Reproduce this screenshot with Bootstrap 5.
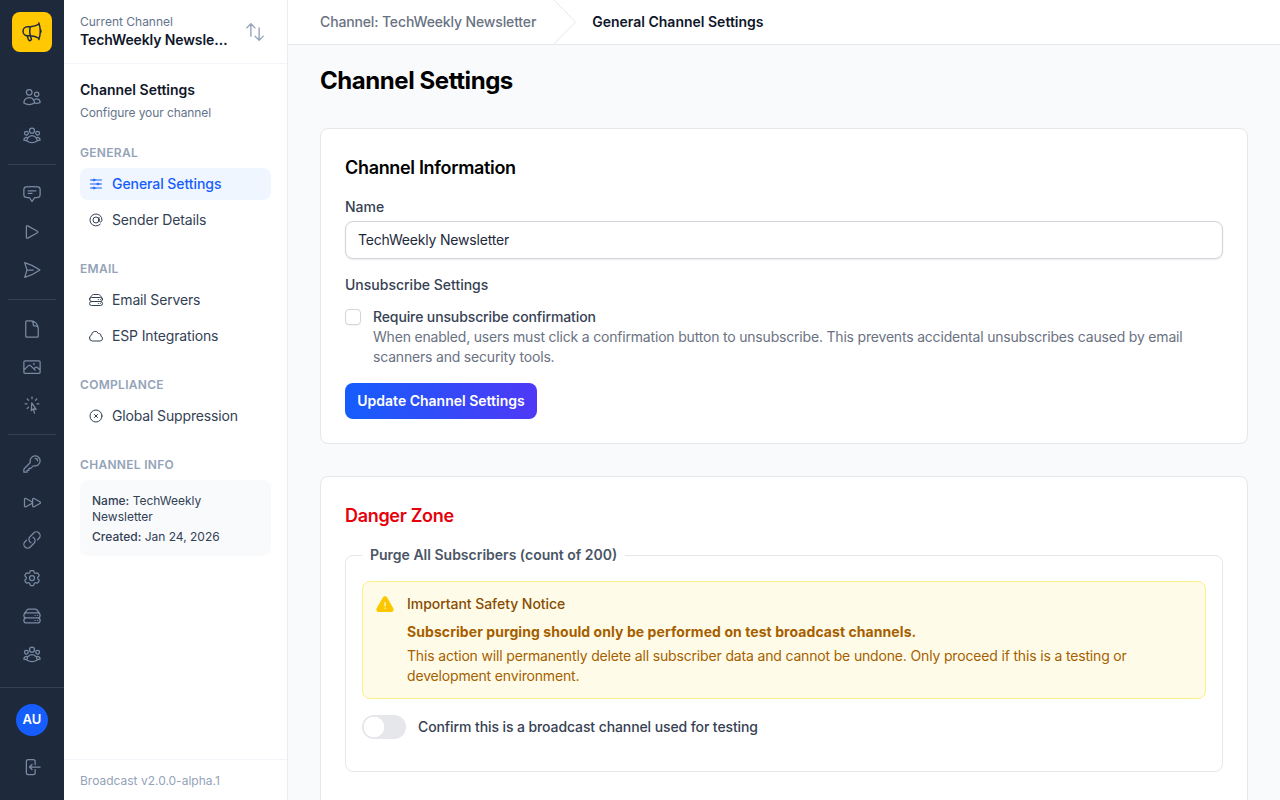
<!DOCTYPE html>
<html lang="en">
<head>
<meta charset="utf-8">
<title>Channel Settings</title>
<link href="https://cdn.jsdelivr.net/npm/bootstrap@5.3.0/dist/css/bootstrap.min.css" rel="stylesheet">
<style>
html,body{height:100%;overflow:hidden}
body{font-family:Inter,"Liberation Sans",sans-serif;font-size:14px;background:#f9fafb;color:#1e293b}
.ic{fill:none;stroke:currentColor;stroke-width:1.5;stroke-linecap:round;stroke-linejoin:round;flex:none}
.rail{width:64px;background:#1e293b;height:800px;flex:none}
.rail-top{padding-top:12px}
.logo-box{width:40px;height:40px;background:#ffc800;border-radius:8px;color:#1e293b;margin-bottom:26px}
.rail-btn{width:36px;height:38px;color:#7a8aa3}
.rail-rule{width:48px;height:1px;background:#334155;margin:10px 0 10px}
.rail-foot{height:113px;border-top:1px solid #334155;padding-top:16px}
.avatar-dot{width:32px;height:32px;background:#155dfc;color:#fff;font-weight:600;font-size:13px;border-radius:50%;margin-bottom:12px}
.side{width:224px;flex:none;height:800px;background:#fff;border-right:1px solid #e9edf2}
.side-head{height:64px;border-bottom:1px solid #f1f5f9;padding:0 16px}
.cur-label{font-size:12px;line-height:16px;color:#64748b}
.cur-name{font-size:14px;line-height:20px;font-weight:600;color:#0f172a;width:149px;letter-spacing:-.12px}
.swap-ic{color:#94a3b8;margin-right:5px}
.side-body{padding:16px 16px 0}
.side-title{font-size:14px;line-height:20px;font-weight:600;color:#0f172a;margin-top:0}
.side-sub{font-size:12px;line-height:16px;color:#64748b;margin-top:5px;margin-bottom:24px;letter-spacing:-.09px}
.sec-label{font-size:12px;line-height:16px;font-weight:600;letter-spacing:.3px;color:#94a3b8;text-transform:uppercase;margin-bottom:7px}
.side-link{height:32px;padding:0 8px 2px;gap:8px;border-radius:8px;color:#334155;font-size:14px;text-decoration:none;margin-bottom:4px;letter-spacing:-.15px}
.side-link svg{margin-top:2px}
.side-link.on{background:#eff6ff;color:#155dfc;font-weight:500;letter-spacing:-.07px}
.side-group{margin-bottom:25px}
.info-box{background:#f8fafc;border-radius:8px;padding:13px 12px 11px;font-size:12px;line-height:16px;color:#334155}
.info-box b{font-weight:500}
.side-foot{height:41px;border-top:1px solid #f1f5f9;padding:2px 16px 0;font-size:12px;color:#94a3b8}
.crumbs{height:45px;background:#fff;border-bottom:1px solid #e5e7eb;padding-left:32px;font-size:14px}
.crumb-a{color:#6a7282;font-weight:500;letter-spacing:-.14px;padding-bottom:2px}
.crumb-b{color:#0f172a;font-weight:600;padding-bottom:2px}
.crumb-arrow{margin:0 15px 0 16px;height:44px;width:25px;fill:none;stroke:#e5e7eb;stroke-width:1;flex:none}
.page-wrap{padding:20px 32px 0}
.page-h{font-size:24px;line-height:32px;font-weight:700;color:#000;margin:0 0 31px;letter-spacing:-.018em}
.sheet{border:1px solid #e5e7eb;border-radius:8px;background:#fff;padding:24px;margin-bottom:32px}
.sheet-h{font-size:18px;line-height:28px;font-weight:600;color:#000;margin:0 0 14px;padding-top:1px;height:30px;letter-spacing:-.018em}
.sheet-h.red{color:#e7000b;margin-bottom:14px}
.fl{font-size:14px;line-height:20px;font-weight:500;color:#364153;margin-bottom:4px}
.fl-gap{margin-bottom:12px}
.fi{height:38px;font-size:14px;padding:0 12px 2px;border:1px solid #d1d5dc;border-radius:8px;color:#1e293b;box-shadow:0 1px 2px rgba(0,0,0,.08);margin-bottom:16px;letter-spacing:-.19px}
.chk-row{display:flex;gap:12px;padding:0;margin:0 0 16px}
.chk-row .form-check-input{width:16px;height:16px;margin:2px 0 0;float:none;border:1px solid #d1d5dc;border-radius:4px;flex:none;box-shadow:0 1px 1px rgba(0,0,0,.05)}
.chk-t{line-height:20px;font-weight:500;color:#364153;letter-spacing:-.12px}
.chk-d{line-height:20px;color:#6a7282;letter-spacing:-.19px}
.go-btn{height:36px;width:192px;padding:0 0 2px;font-size:14px;font-weight:600;color:#fff;border:0;border-radius:8px;background:linear-gradient(90deg,#155dfc,#4f39f6)}
.purge-set{border:1px solid #e5e7eb;border-radius:8px;padding:0 16px 32px;margin:0 0 32px;min-width:0}
.purge-set legend{float:none;width:auto;font-size:14px;line-height:20px;font-weight:600;color:#4a5565;padding:0 8px;margin:0 0 16px 0}
.notice{background:#fefce8;border:1px solid #fff085;border-radius:8px;padding:12px 12px;margin:0 0 16px;gap:12px;color:#a65f00;line-height:20px;letter-spacing:-.165px}
.notice-ic{fill:#fdc700;stroke:none;flex:none;margin-top:1px}
.notice-t{font-weight:500;color:#894b00;margin-bottom:8px;letter-spacing:-.05px}
.notice-b{font-weight:700;margin-bottom:4px;letter-spacing:.07px}
.sw-row{display:flex;align-items:center;gap:12px;padding:0;margin:0}
.sw-row .form-check-input{width:44px;height:24px;margin:0;float:none;background-color:#e5e7eb;border:0;background-image:radial-gradient(circle at 12px 12px,#fff 10px,transparent 10.5px);background-position:0 0;background-size:100% 100%}
.sw-row span{font-weight:500;color:#364153;letter-spacing:-.1px;padding-bottom:2px}
</style>
</head>
<body>
<svg width="0" height="0" class="d-block position-absolute">
<defs>
<symbol id="i-mega" viewBox="0 0 24 24"><path d="M10.34 15.84c-.688-.06-1.386-.09-2.09-.09H7.5a4.5 4.5 0 1 1 0-9h.75c.704 0 1.402-.03 2.09-.09m0 9.18c.253.962.584 1.892.985 2.783.247.55.06 1.21-.463 1.511l-.657.38c-.551.318-1.26.117-1.527-.461a20.845 20.845 0 0 1-1.44-4.282m3.102.069a18.03 18.03 0 0 1-.59-4.59c0-1.586.205-3.124.59-4.59m0 9.18a23.848 23.848 0 0 1 8.835 2.535M10.34 6.66a23.847 23.847 0 0 0 8.835-2.535m0 0A23.74 23.74 0 0 0 18.795 3m.38 1.125a23.91 23.91 0 0 1 1.014 5.395m-1.014 8.855c-.118.38-.245.754-.38 1.125m.38-1.125a23.91 23.91 0 0 0 1.014-5.395m0-3.46c.495.413.811 1.035.811 1.73 0 .695-.316 1.317-.811 1.73m0-3.46a24.347 24.347 0 0 1 0 3.46"/></symbol>
<symbol id="i-users" viewBox="0 0 24 24"><path d="M15 19.128a9.38 9.38 0 0 0 2.625.372 9.337 9.337 0 0 0 4.121-.952 4.125 4.125 0 0 0-7.533-2.493M15 19.128v-.003c0-1.113-.285-2.16-.786-3.07M15 19.128v.106A12.318 12.318 0 0 1 8.624 21c-2.331 0-4.512-.645-6.374-1.766l-.001-.109a6.375 6.375 0 0 1 11.964-3.07M12 6.375a3.375 3.375 0 1 1-6.75 0 3.375 3.375 0 0 1 6.75 0Zm8.25 2.25a2.625 2.625 0 1 1-5.25 0 2.625 2.625 0 0 1 5.25 0Z"/></symbol>
<symbol id="i-group" viewBox="0 0 24 24"><path d="M18 18.72a9.094 9.094 0 0 0 3.741-.479 3 3 0 0 0-4.682-2.72m.94 3.198.001.031c0 .225-.012.447-.037.666A11.944 11.944 0 0 1 12 21c-2.17 0-4.207-.576-5.963-1.584A6.062 6.062 0 0 1 6 18.719m12 0a5.971 5.971 0 0 0-.941-3.197m0 0A5.995 5.995 0 0 0 12 12.75a5.995 5.995 0 0 0-5.058 2.772m0 0a3 3 0 0 0-4.681 2.72 8.986 8.986 0 0 0 3.74.477m.94-3.197a5.971 5.971 0 0 0-.94 3.197M15 6.75a3 3 0 1 1-6 0 3 3 0 0 1 6 0Zm6 3a2.25 2.25 0 1 1-4.5 0 2.25 2.25 0 0 1 4.5 0Zm-13.5 0a2.25 2.25 0 1 1-4.5 0 2.25 2.25 0 0 1 4.5 0Z"/></symbol>
<symbol id="i-chat" viewBox="0 0 24 24"><path d="M7.5 8.25h9m-9 3H12m-9.75 1.51c0 1.6 1.123 2.994 2.707 3.227 1.129.166 2.27.293 3.423.379.35.026.67.21.865.501L12 21l2.755-4.133a1.14 1.14 0 0 1 .865-.501 48.172 48.172 0 0 0 3.423-.379c1.584-.233 2.707-1.626 2.707-3.228V6.741c0-1.602-1.123-2.995-2.707-3.228A48.394 48.394 0 0 0 12 3c-2.392 0-4.744.175-7.043.513C3.373 3.746 2.25 5.14 2.25 6.741v6.018Z"/></symbol>
<symbol id="i-play" viewBox="0 0 24 24"><path d="M5.25 5.653c0-.856.917-1.398 1.667-.986l11.54 6.347a1.125 1.125 0 0 1 0 1.972l-11.54 6.347a1.125 1.125 0 0 1-1.667-.986V5.653Z"/></symbol>
<symbol id="i-send" viewBox="0 0 24 24"><path d="M6 12 3.269 3.125A59.769 59.769 0 0 1 21.485 12 59.768 59.768 0 0 1 3.27 20.875L5.999 12Zm0 0h7.5"/></symbol>
<symbol id="i-doc" viewBox="0 0 24 24"><path d="M19.5 14.25v-2.625a3.375 3.375 0 0 0-3.375-3.375h-1.5A1.125 1.125 0 0 1 13.5 7.125v-1.5a3.375 3.375 0 0 0-3.375-3.375H8.25m2.25 0H5.625c-.621 0-1.125.504-1.125 1.125v17.25c0 .621.504 1.125 1.125 1.125h12.75c.621 0 1.125-.504 1.125-1.125V11.25a9 9 0 0 0-9-9Z"/></symbol>
<symbol id="i-photo" viewBox="0 0 24 24"><path d="m2.25 15.75 5.159-5.159a2.25 2.25 0 0 1 3.182 0l5.159 5.159m-1.5-1.5 1.409-1.409a2.25 2.25 0 0 1 3.182 0l2.909 2.909m-18 3.75h16.5a1.5 1.5 0 0 0 1.5-1.5V6a1.5 1.5 0 0 0-1.5-1.5H3.75A1.5 1.5 0 0 0 2.25 6v12a1.5 1.5 0 0 0 1.5 1.5Zm10.5-11.25h.008v.008h-.008V8.25Zm.375 0a.375.375 0 1 1-.75 0 .375.375 0 0 1 .75 0Z"/></symbol>
<symbol id="i-rays" viewBox="0 0 24 24"><path d="M15.042 21.672 13.684 16.6m0 0-2.51 2.225.569-9.47 5.227 7.917-3.286-.672ZM12 2.25V4.5m5.834.166-1.591 1.591M20.25 10.5H18M7.757 14.743l-1.59 1.59M6 10.5H3.75m4.007-4.243-1.59-1.59"/></symbol>
<symbol id="i-key" viewBox="0 0 24 24"><path d="M15.75 5.25a3 3 0 0 1 3 3m3 0a6 6 0 0 1-7.029 5.912c-.563-.097-1.159.026-1.563.43L10.5 17.25H8.25v2.25H6v2.25H2.25v-2.818c0-.597.237-1.17.659-1.591l6.499-6.499c.404-.404.527-1 .43-1.563A6 6 0 1 1 21.75 8.25Z"/></symbol>
<symbol id="i-fwd" viewBox="0 0 24 24"><path d="M3 8.689c0-.864.933-1.406 1.683-.977l7.108 4.061a1.125 1.125 0 0 1 0 1.954l-7.108 4.061A1.125 1.125 0 0 1 3 16.811V8.69ZM12.75 8.689c0-.864.933-1.406 1.683-.977l7.108 4.061a1.125 1.125 0 0 1 0 1.954l-7.108 4.061a1.125 1.125 0 0 1-1.683-.977V8.69Z"/></symbol>
<symbol id="i-link" viewBox="0 0 24 24"><path d="M13.19 8.688a4.5 4.5 0 0 1 1.242 7.244l-4.5 4.5a4.5 4.5 0 0 1-6.364-6.364l1.757-1.757m13.35-.622 1.757-1.757a4.5 4.5 0 0 0-6.364-6.364l-4.5 4.5a4.5 4.5 0 0 0 1.242 7.244"/></symbol>
<symbol id="i-cog" viewBox="0 0 24 24"><path d="M9.594 3.94c.09-.542.56-.94 1.11-.94h2.593c.55 0 1.02.398 1.11.94l.213 1.281c.063.374.313.686.645.87.074.04.147.083.22.127.325.196.72.257 1.075.124l1.217-.456a1.125 1.125 0 0 1 1.37.49l1.296 2.247a1.125 1.125 0 0 1-.26 1.431l-1.003.827c-.293.241-.438.613-.43.992a7.723 7.723 0 0 1 0 .255c-.008.378.137.75.43.991l1.004.827c.424.35.534.955.26 1.43l-1.298 2.247a1.125 1.125 0 0 1-1.369.491l-1.217-.456c-.355-.133-.75-.072-1.076.124a6.47 6.47 0 0 1-.22.128c-.331.183-.581.495-.644.869l-.213 1.281c-.09.543-.56.94-1.11.94h-2.594c-.55 0-1.019-.398-1.11-.94l-.213-1.281c-.062-.374-.312-.686-.644-.87a6.52 6.52 0 0 1-.22-.127c-.325-.196-.72-.257-1.076-.124l-1.217.456a1.125 1.125 0 0 1-1.369-.49l-1.297-2.247a1.125 1.125 0 0 1 .26-1.431l1.004-.827c.292-.24.437-.613.43-.991a6.932 6.932 0 0 1 0-.255c.007-.38-.138-.751-.43-.992l-1.004-.827a1.125 1.125 0 0 1-.26-1.43l1.297-2.247a1.125 1.125 0 0 1 1.37-.491l1.216.456c.356.133.751.072 1.076-.124.072-.044.146-.086.22-.128.332-.183.582-.495.644-.869l.214-1.28Z"/><path d="M15 12a3 3 0 1 1-6 0 3 3 0 0 1 6 0Z"/></symbol>
<symbol id="i-srv" viewBox="0 0 24 24"><path d="M5.25 14.25h13.5m-13.5 0a3 3 0 0 1-3-3m3 3a3 3 0 1 0 0 6h13.5a3 3 0 1 0 0-6m-16.5-3a3 3 0 0 1 3-3h13.5a3 3 0 0 1 3 3m-19.5 0a4.5 4.5 0 0 1 .9-2.7L5.737 5.1a3.375 3.375 0 0 1 2.7-1.35h7.126c1.062 0 2.062.5 2.7 1.35l2.587 3.45a4.5 4.5 0 0 1 .9 2.7m0 0a3 3 0 0 1-3 3m0 3h.008v.008h-.008v-.008Zm0-6h.008v.008h-.008v-.008Zm-3 6h.008v.008h-.008v-.008Zm0-6h.008v.008h-.008v-.008Z"/></symbol>
<symbol id="i-out" viewBox="0 0 24 24"><path d="M15.75 9V5.25A2.25 2.25 0 0 0 13.5 3h-6a2.25 2.25 0 0 0-2.25 2.25v13.5A2.25 2.25 0 0 0 7.5 21h6a2.25 2.25 0 0 0 2.25-2.25V15M12 9l-3 3m0 0 3 3m-3-3h12.75"/></symbol>
<symbol id="i-swap" viewBox="0 0 24 24"><path d="M3 7.5 7.5 3m0 0L12 7.5M7.5 3v13.5m13.5 0L16.5 21m0 0L12 16.5m4.5 4.5V7.5"/></symbol>
<symbol id="i-adj" viewBox="0 0 24 24"><path d="M10.5 6h9.75M10.5 6a1.5 1.5 0 1 1-3 0m3 0a1.5 1.5 0 1 0-3 0M3.75 6H7.5m3 12h9.75m-9.75 0a1.5 1.5 0 0 1-3 0m3 0a1.5 1.5 0 0 0-3 0m-3.75 0H7.5m9-6h3.75m-3.75 0a1.5 1.5 0 0 1-3 0m3 0a1.5 1.5 0 0 0-3 0m-9.75 0h9.75"/></symbol>
<symbol id="i-at" viewBox="0 0 24 24"><path d="M16.5 12a4.5 4.5 0 1 1-9 0 4.5 4.5 0 0 1 9 0Zm0 0c0 1.657 1.007 3 2.25 3S21 13.657 21 12a9 9 0 1 0-2.636 6.364M16.5 12V8.25"/></symbol>
<symbol id="i-cloud" viewBox="0 0 24 24"><path d="M2.25 15a4.5 4.5 0 0 0 4.5 4.5H18a3.75 3.75 0 0 0 1.332-7.257 3 3 0 0 0-3.758-3.848 5.25 5.25 0 0 0-10.142 2.1A4.502 4.502 0 0 0 2.25 15Z"/></symbol>
<symbol id="i-x" viewBox="0 0 24 24"><path d="m9.75 9.75 4.5 4.5m0-4.5-4.5 4.5M21 12a9 9 0 1 1-18 0 9 9 0 0 1 18 0Z"/></symbol>
</defs>
</svg>

<div class="d-flex">
  <nav class="rail d-flex flex-column">
    <div class="rail-top flex-grow-1 d-flex flex-column align-items-center">
      <div class="logo-box d-flex align-items-center justify-content-center"><svg class="ic" width="24" height="24"><use href="#i-mega"/></svg></div>
      <a class="rail-btn d-flex align-items-center justify-content-center"><svg class="ic" width="20" height="20"><use href="#i-users"/></svg></a>
      <a class="rail-btn d-flex align-items-center justify-content-center"><svg class="ic" width="20" height="20"><use href="#i-group"/></svg></a>
      <div class="rail-rule"></div>
      <a class="rail-btn d-flex align-items-center justify-content-center"><svg class="ic" width="20" height="20"><use href="#i-chat"/></svg></a>
      <a class="rail-btn d-flex align-items-center justify-content-center"><svg class="ic" width="20" height="20"><use href="#i-play"/></svg></a>
      <a class="rail-btn d-flex align-items-center justify-content-center"><svg class="ic" width="20" height="20"><use href="#i-send"/></svg></a>
      <div class="rail-rule"></div>
      <a class="rail-btn d-flex align-items-center justify-content-center"><svg class="ic" width="20" height="20"><use href="#i-doc"/></svg></a>
      <a class="rail-btn d-flex align-items-center justify-content-center"><svg class="ic" width="20" height="20"><use href="#i-photo"/></svg></a>
      <a class="rail-btn d-flex align-items-center justify-content-center"><svg class="ic" width="20" height="20"><use href="#i-rays"/></svg></a>
      <div class="rail-rule"></div>
      <a class="rail-btn d-flex align-items-center justify-content-center"><svg class="ic" width="20" height="20"><use href="#i-key"/></svg></a>
      <a class="rail-btn d-flex align-items-center justify-content-center"><svg class="ic" width="20" height="20"><use href="#i-fwd"/></svg></a>
      <a class="rail-btn d-flex align-items-center justify-content-center"><svg class="ic" width="20" height="20"><use href="#i-link"/></svg></a>
      <a class="rail-btn d-flex align-items-center justify-content-center"><svg class="ic" width="20" height="20"><use href="#i-cog"/></svg></a>
      <a class="rail-btn d-flex align-items-center justify-content-center"><svg class="ic" width="20" height="20"><use href="#i-srv"/></svg></a>
      <a class="rail-btn d-flex align-items-center justify-content-center"><svg class="ic" width="20" height="20"><use href="#i-group"/></svg></a>
    </div>
    <div class="rail-foot d-flex flex-column align-items-center">
      <div class="avatar-dot d-flex align-items-center justify-content-center">AU</div>
      <a class="rail-btn d-flex align-items-center justify-content-center"><svg class="ic" width="20" height="20"><use href="#i-out"/></svg></a>
    </div>
  </nav>

  <aside class="side d-flex flex-column">
    <div class="side-head d-flex align-items-center justify-content-between">
      <div>
        <div class="cur-label">Current Channel</div>
        <div class="cur-name text-truncate">TechWeekly Newsletter</div>
      </div>
      <svg class="ic swap-ic" width="22" height="22"><use href="#i-swap"/></svg>
    </div>
    <div class="side-body flex-grow-1">
      <div class="side-title">Channel Settings</div>
      <div class="side-sub">Configure your channel</div>
      <div class="side-group">
        <div class="sec-label">General</div>
        <a class="side-link on d-flex align-items-center"><svg class="ic" width="16" height="16"><use href="#i-adj"/></svg>General Settings</a>
        <a class="side-link d-flex align-items-center"><svg class="ic" width="16" height="16"><use href="#i-at"/></svg>Sender Details</a>
      </div>
      <div class="side-group">
        <div class="sec-label">Email</div>
        <a class="side-link d-flex align-items-center"><svg class="ic" width="16" height="16"><use href="#i-srv"/></svg>Email Servers</a>
        <a class="side-link d-flex align-items-center"><svg class="ic" width="16" height="16"><use href="#i-cloud"/></svg>ESP Integrations</a>
      </div>
      <div class="side-group">
        <div class="sec-label">Compliance</div>
        <a class="side-link d-flex align-items-center"><svg class="ic" width="16" height="16"><use href="#i-x"/></svg>Global Suppression</a>
      </div>
      <div class="sec-label">Channel Info</div>
      <div class="info-box">
        <div class="mb-1"><b>Name:</b> TechWeekly Newsletter</div>
        <div><b>Created:</b> Jan 24, 2026</div>
      </div>
    </div>
    <div class="side-foot d-flex align-items-center">Broadcast v2.0.0-alpha.1</div>
  </aside>

  <main class="flex-grow-1">
    <div class="crumbs d-flex align-items-center">
      <span class="crumb-a">Channel: TechWeekly Newsletter</span>
      <svg class="crumb-arrow" viewBox="0 0 25 44"><path d="M1 -1 23.5 22 1 45"/></svg>
      <span class="crumb-b">General Channel Settings</span>
    </div>
    <div class="page-wrap">
      <h1 class="page-h">Channel Settings</h1>
      <section class="sheet">
        <h2 class="sheet-h">Channel Information</h2>
        <label class="fl d-block" for="cname">Name</label>
        <input id="cname" class="form-control fi" value="TechWeekly Newsletter">
        <div class="fl fl-gap">Unsubscribe Settings</div>
        <div class="form-check chk-row">
          <input class="form-check-input" type="checkbox" id="c1">
          <label for="c1">
            <span class="chk-t d-block">Require unsubscribe confirmation</span>
            <span class="chk-d d-block">When enabled, users must click a confirmation button to unsubscribe. This prevents accidental unsubscribes caused by email scanners and security tools.</span>
          </label>
        </div>
        <button class="btn go-btn" type="button">Update Channel Settings</button>
      </section>
      <section class="sheet">
        <h2 class="sheet-h red">Danger Zone</h2>
        <fieldset class="purge-set">
          <legend>Purge All Subscribers (count of 200)</legend>
          <div class="alert notice d-flex">
            <svg class="notice-ic" width="20" height="20" viewBox="0 0 24 24"><path fill-rule="evenodd" d="M9.401 3.003c1.155-2 4.043-2 5.197 0l7.355 12.748c1.154 2-.29 4.5-2.599 4.5H4.645c-2.309 0-3.752-2.5-2.598-4.5L9.4 3.003ZM12 8.25a.75.75 0 0 1 .75.75v3.75a.75.75 0 0 1-1.5 0V9A.75.75 0 0 1 12 8.25Zm0 8.25a.75.75 0 1 0 0-1.5.75.75 0 0 0 0 1.5Z"/></svg>
            <div>
              <div class="notice-t">Important Safety Notice</div>
              <div class="notice-b">Subscriber purging should only be performed on test broadcast channels.</div>
              <div>This action will permanently delete all subscriber data and cannot be undone. Only proceed if this is a testing or development environment.</div>
            </div>
          </div>
          <label class="form-check form-switch sw-row">
            <input class="form-check-input" type="checkbox" role="switch">
            <span>Confirm this is a broadcast channel used for testing</span>
          </label>
        </fieldset>
      </section>
    </div>
  </main>
</div>
<script src="https://cdn.jsdelivr.net/npm/bootstrap@5.3.0/dist/js/bootstrap.bundle.min.js"></script>
</body>
</html>
